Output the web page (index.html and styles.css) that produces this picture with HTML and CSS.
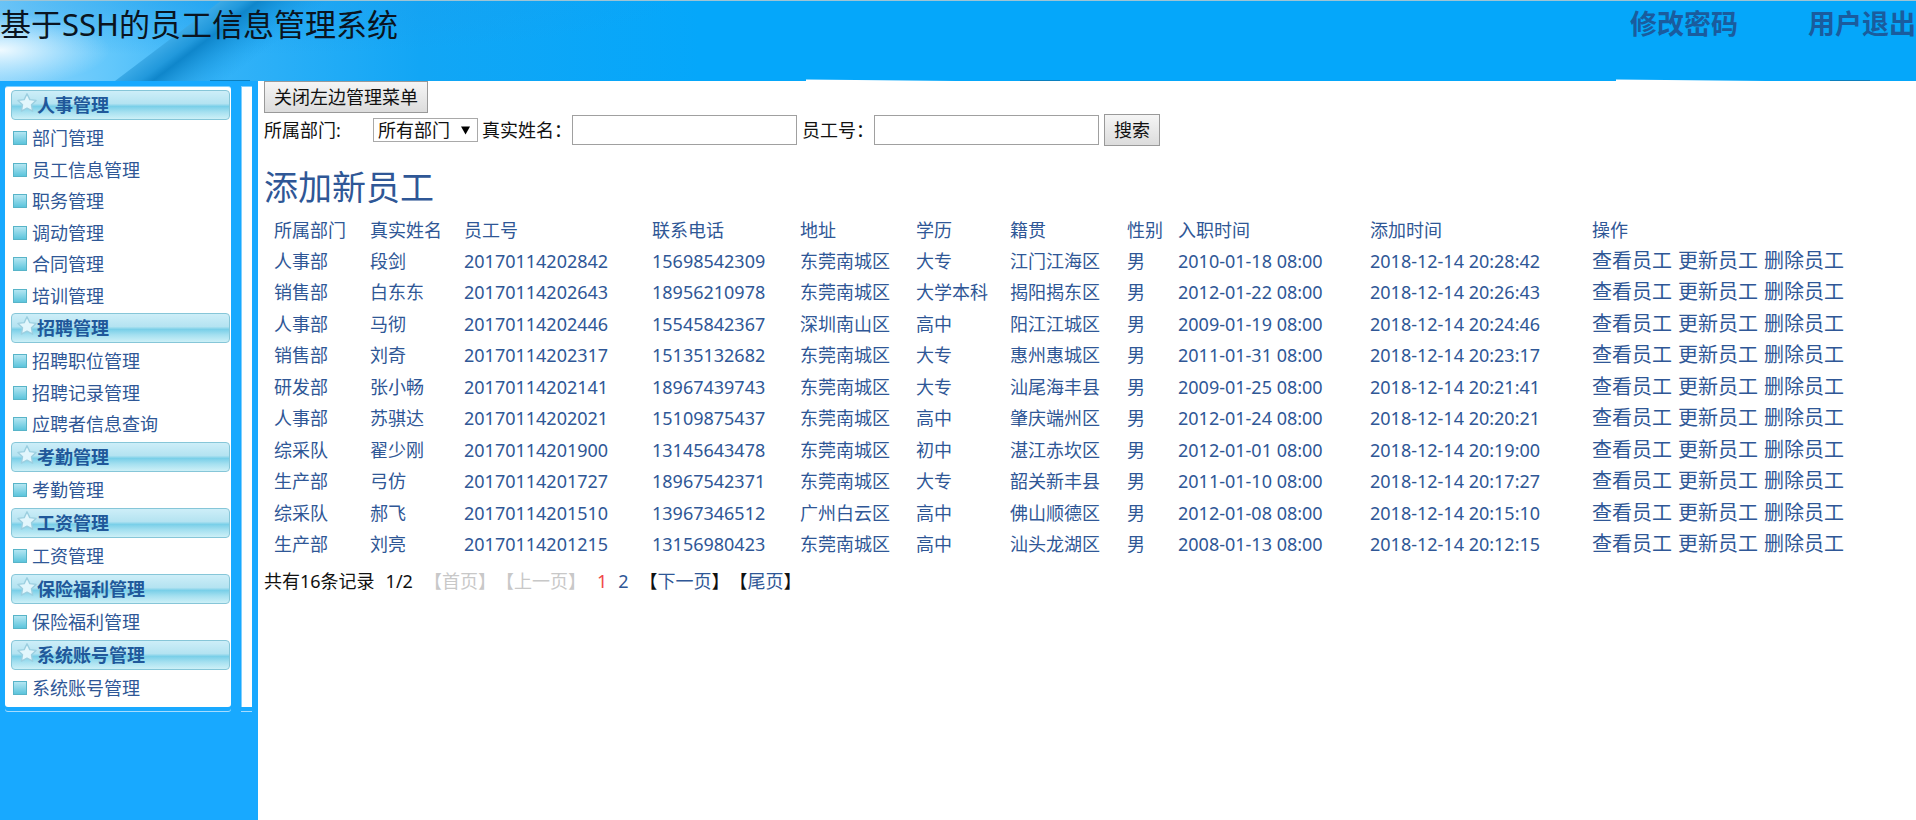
FILE: index.html
```html
<!DOCTYPE html>
<html lang="zh-CN">
<head>
<meta charset="utf-8">
<title>基于SSH的员工信息管理系统</title>
<link rel="stylesheet" href="styles.css">
</head>
<body>
<svg class="defs" aria-hidden="true">
  <symbol id="star" viewBox="0 0 20 20">
    <path d="M10 .8 12.800 6.600l6.200.8-4.500 4.400 1.100 6.300L10 15.100l-5.600 3 1.100-6.300L1 7.400l6.200-.8z" fill="#e2f6fc" stroke="#9ccfe0" stroke-width="1.400" stroke-linejoin="round"/>
  </symbol>
</svg>
<header class="top">
  <svg class="top-art" width="1916" height="80" viewBox="0 1 1916 80" aria-hidden="true">
    <defs>
      <linearGradient id="sky" x1="0" x2="1" y1="0" y2="0">
        <stop offset="0" stop-color="#8fd5fb"/><stop offset=".16" stop-color="#62c7fb"/><stop offset=".3" stop-color="#35b3f8"/><stop offset=".6" stop-color="#12a6f5"/><stop offset="1" stop-color="#05a7fa"/>
      </linearGradient>
      <radialGradient id="shade" gradientUnits="userSpaceOnUse" cx="0" cy="0" r="1" gradientTransform="translate(200 0) scale(480 55)">
        <stop offset="0" stop-color="#1a9cec" stop-opacity=".55"/><stop offset="1" stop-color="#1a9cec" stop-opacity="0"/>
      </radialGradient>
      <radialGradient id="glow" gradientUnits="userSpaceOnUse" cx="0" cy="0" r="1" gradientTransform="translate(0 50) scale(110 36)">
        <stop offset="0" stop-color="#f0faff"/><stop offset="1" stop-color="#c8ecff" stop-opacity="0"/>
      </radialGradient>
      <linearGradient id="beam" gradientUnits="userSpaceOnUse" x1="168" y1="41" x2="208" y2="94">
        <stop offset="0" stop-color="#3aa9e6"/><stop offset=".22" stop-color="#2299dc"/><stop offset=".34" stop-color="#0f86cb"/><stop offset="1" stop-color="#1b9fe8" stop-opacity="0"/>
      </linearGradient>
    </defs>
    <rect width="700" height="81" fill="url(#sky)"/>
    <rect width="700" height="81" fill="url(#shade)"/>
    <rect width="140" height="81" fill="url(#glow)"/>
    <path d="M222 0H440V81H115z" fill="url(#beam)"/>
    <path d="M210 80h40v1h-40zM1020 80h40v1h-40zM1830 80h40v1h-40z" fill="#0b7fbd"/>
    <path d="M806 79.500l150 1.500H806zM1616 79.500l150 1.500h-150z" fill="#fff"/>
  </svg>
  <h1 class="top-title">基于SSH的员工信息管理系统</h1>
  <nav class="top-nav">
    <a href="#">修改密码</a>
    <a href="#">用户退出</a>
  </nav>
</header>
<div class="body">
  <aside class="side">
    <div class="side-row">
    <nav class="menu">
      <h2><svg><use href="#star"/></svg>人事管理</h2>
      <ul>
        <li><a href="#">部门管理</a></li>
        <li><a href="#">员工信息管理</a></li>
        <li><a href="#">职务管理</a></li>
        <li><a href="#">调动管理</a></li>
        <li><a href="#">合同管理</a></li>
        <li><a href="#">培训管理</a></li>
      </ul>
      <h2><svg><use href="#star"/></svg>招聘管理</h2>
      <ul>
        <li><a href="#">招聘职位管理</a></li>
        <li><a href="#">招聘记录管理</a></li>
        <li><a href="#">应聘者信息查询</a></li>
      </ul>
      <h2><svg><use href="#star"/></svg>考勤管理</h2>
      <ul><li><a href="#">考勤管理</a></li></ul>
      <h2><svg><use href="#star"/></svg>工资管理</h2>
      <ul><li><a href="#">工资管理</a></li></ul>
      <h2><svg><use href="#star"/></svg>保险福利管理</h2>
      <ul><li><a href="#">保险福利管理</a></li></ul>
      <h2><svg><use href="#star"/></svg>系统账号管理</h2>
      <ul><li><a href="#">系统账号管理</a></li></ul>
    </nav>
    <div class="rail"></div>
    </div>
  </aside>
  <main class="main">
    <button type="button" class="btn">关闭左边管理菜单</button>
    <form class="search">
      <label class="dept-label" for="dept">所属部门:</label>
      <span class="select-box"><select id="dept"><option>所有部门</option></select><svg width="9" height="9" viewBox="0 0 10 9" aria-hidden="true"><path d="M0 0h10L5 9z"/></svg></span>
      <label for="name">真实姓名：</label><input id="name" type="text">
      <label for="no">员工号：</label><input id="no" type="text">
      <button type="submit" class="btn">搜索</button>
    </form>
    <a class="add" href="#">添加新员工</a>
    <table class="staff">
      <colgroup><col class="c-dept"><col class="c-name"><col class="c-no"><col class="c-tel"><col class="c-addr"><col class="c-edu"><col class="c-from"><col class="c-sex"><col class="c-join"><col class="c-added"><col></colgroup>
      <thead>
        <tr><th>所属部门</th><th>真实姓名</th><th>员工号</th><th>联系电话</th><th>地址</th><th>学历</th><th>籍贯</th><th>性别</th><th>入职时间</th><th>添加时间</th><th>操作</th></tr>
      </thead>
      <tbody>
        <tr><td>人事部</td><td>段剑</td><td>20170114202842</td><td>15698542309</td><td>东莞南城区</td><td>大专</td><td>江门江海区</td><td>男</td><td>2010-01-18 08:00</td><td>2018-12-14 20:28:42</td><td><div class="ops"><a href="#">查看员工</a><a href="#">更新员工</a><a href="#">删除员工</a></div></td></tr>
        <tr><td>销售部</td><td>白东东</td><td>20170114202643</td><td>18956210978</td><td>东莞南城区</td><td>大学本科</td><td>揭阳揭东区</td><td>男</td><td>2012-01-22 08:00</td><td>2018-12-14 20:26:43</td><td><div class="ops"><a href="#">查看员工</a><a href="#">更新员工</a><a href="#">删除员工</a></div></td></tr>
        <tr><td>人事部</td><td>马彻</td><td>20170114202446</td><td>15545842367</td><td>深圳南山区</td><td>高中</td><td>阳江江城区</td><td>男</td><td>2009-01-19 08:00</td><td>2018-12-14 20:24:46</td><td><div class="ops"><a href="#">查看员工</a><a href="#">更新员工</a><a href="#">删除员工</a></div></td></tr>
        <tr><td>销售部</td><td>刘奇</td><td>20170114202317</td><td>15135132682</td><td>东莞南城区</td><td>大专</td><td>惠州惠城区</td><td>男</td><td>2011-01-31 08:00</td><td>2018-12-14 20:23:17</td><td><div class="ops"><a href="#">查看员工</a><a href="#">更新员工</a><a href="#">删除员工</a></div></td></tr>
        <tr><td>研发部</td><td>张小畅</td><td>20170114202141</td><td>18967439743</td><td>东莞南城区</td><td>大专</td><td>汕尾海丰县</td><td>男</td><td>2009-01-25 08:00</td><td>2018-12-14 20:21:41</td><td><div class="ops"><a href="#">查看员工</a><a href="#">更新员工</a><a href="#">删除员工</a></div></td></tr>
        <tr><td>人事部</td><td>苏骐达</td><td>20170114202021</td><td>15109875437</td><td>东莞南城区</td><td>高中</td><td>肇庆端州区</td><td>男</td><td>2012-01-24 08:00</td><td>2018-12-14 20:20:21</td><td><div class="ops"><a href="#">查看员工</a><a href="#">更新员工</a><a href="#">删除员工</a></div></td></tr>
        <tr><td>综采队</td><td>翟少刚</td><td>20170114201900</td><td>13145643478</td><td>东莞南城区</td><td>初中</td><td>湛江赤坎区</td><td>男</td><td>2012-01-01 08:00</td><td>2018-12-14 20:19:00</td><td><div class="ops"><a href="#">查看员工</a><a href="#">更新员工</a><a href="#">删除员工</a></div></td></tr>
        <tr><td>生产部</td><td>弓仿</td><td>20170114201727</td><td>18967542371</td><td>东莞南城区</td><td>大专</td><td>韶关新丰县</td><td>男</td><td>2011-01-10 08:00</td><td>2018-12-14 20:17:27</td><td><div class="ops"><a href="#">查看员工</a><a href="#">更新员工</a><a href="#">删除员工</a></div></td></tr>
        <tr><td>综采队</td><td>郝飞</td><td>20170114201510</td><td>13967346512</td><td>广州白云区</td><td>高中</td><td>佛山顺德区</td><td>男</td><td>2012-01-08 08:00</td><td>2018-12-14 20:15:10</td><td><div class="ops"><a href="#">查看员工</a><a href="#">更新员工</a><a href="#">删除员工</a></div></td></tr>
        <tr><td>生产部</td><td>刘亮</td><td>20170114201215</td><td>13156980423</td><td>东莞南城区</td><td>高中</td><td>汕头龙湖区</td><td>男</td><td>2008-01-13 08:00</td><td>2018-12-14 20:12:15</td><td><div class="ops"><a href="#">查看员工</a><a href="#">更新员工</a><a href="#">删除员工</a></div></td></tr>
      </tbody>
    </table>
    <div class="pager">
      <span>共有16条记录</span>
      <span>1/2</span>
      <span class="off">【首页】【上一页】</span>
      <span class="now">1</span>
      <a href="#">2</a>
      <span class="jump">【<a href="#">下一页</a>】【<a href="#">尾页</a>】</span>
    </div>
  </main>
</div>
</body>
</html>
```
FILE: styles.css
```css
* { box-sizing: border-box; }
body {
  margin: 0;
  min-height: 100vh;
  display: flex;
  flex-direction: column;
  background: #fff;
  color: #111;
  font: 18px/28px "Noto Sans", "Noto Sans CJK SC", sans-serif;
  text-spacing-trim: space-all;
}
a { color: inherit; text-decoration: none; }
h1, h2, ul { margin: 0; padding: 0; font-weight: normal; }
ul { list-style: none; }
.defs { position: absolute; width: 0; height: 0; }

.top {
  position: relative;
  display: flex;
  justify-content: space-between;
  height: 81px;
  overflow: hidden;
  background: #05a7fa;
  border-top: 1px solid #9fc4d4;
}
.top-art { position: absolute; left: 0; top: 0; }
.top-title {
  position: relative;
  font-size: 31px;
  line-height: 46px;
  color: #0a1420;
}
.top-nav {
  position: relative;
  display: flex;
  gap: 70px;
  font-size: 27px;
  line-height: 46px;
  font-weight: bold;
  color: #1a5c9e;
}

.body { flex: 1; display: flex; }
.side {
  flex: none;
  width: 258px;
  padding: 5px 6px 0 5px;
  background: #18a9ff;
}
.side-row { display: flex; gap: 10px; }
.menu {
  width: 226px;
  padding: 3px 1px 1px 6px;
  background: #fff;
  border-top: 1px solid #7fd0ff;
  border-radius: 3px;
  box-shadow: 0 4px 0 #18a9ff, 0 5px 0 #a5dcff;
}
.rail {
  flex: 1;
  background: #fff;
  border-left: 1px solid #7fd0ff;
  border-top: 1px solid #7fd0ff;
  box-shadow: 0 4px 0 #18a9ff, 0 5px 0 #a5dcff;
}
.menu h2 {
  display: flex;
  align-items: center;
  height: 30px;
  margin: 0 0 4px;
  padding-left: 5px;
  font-size: 18px;
  font-weight: bold;
  color: #20589a;
  border: 1px solid #86c6d8;
  border-radius: 4px;
  background: linear-gradient(#cdeef8, #b4e3f1 45%, #79cfe8 55%, #a5e0f0 75%, #cdf0f7);
}
.menu h2 svg { width: 20px; height: 20px; margin-bottom: 4px; }
.menu li { height: 31px; padding-left: 2px; }
.menu li:nth-child(odd) { height: 32px; }
.menu li a { display: flex; align-items: center; gap: 5px; color: #2f5796; }
.menu li a::before {
  content: "";
  width: 12px;
  height: 12px;
  border: 1px solid #58b4c8;
  background: linear-gradient(#b4e6f2, #5cc4dc);
}

.main { flex: 1; min-width: 0; padding-left: 6px; }
.btn {
  display: block;
  height: 32px;
  padding: 0 9px;
  border: 1px solid #999;
  background: linear-gradient(#f5f5f5, #dcdcdc);
  color: #111;
  font: inherit;
}
.search { display: flex; align-items: center; height: 34px; }
.search .dept-label { width: 109px; }
.select-box { display: flex; align-items: center; position: relative; margin-right: 4px; }
.select-box svg { position: absolute; right: 8px; pointer-events: none; }
.search select {
  appearance: none;
  width: 105px;
  height: 24px;
  padding: 0 4px;
  border: 1px solid #a9a9a9;
  border-radius: 0;
  background: #fff;
  color: #111;
  font: inherit;
  line-height: 22px;
}
.search input {
  width: 225px;
  height: 30px;
  margin-right: 5px;
  border: 1px solid #a0a0a0;
  font: inherit;
}
.add {
  display: block;
  width: max-content;
  margin: 15px 0 2px;
  font-size: 34px;
  line-height: 50px;
  color: #2f5796;
}
.staff {
  width: 100%;
  table-layout: fixed;
  border-collapse: collapse;
  color: #2f5796;
}
.staff tr { height: 31px; }
.staff tr:nth-child(even) { height: 32px; }
.staff th, .staff td {
  padding: 0 0 0 10px;
  text-align: left;
  font-weight: normal;
  white-space: nowrap;
}
.ops { display: flex; gap: 6px; font-size: 20px; }
.c-dept { width: 96px; }
.c-name { width: 94px; }
.c-no { width: 188px; }
.c-tel { width: 148px; }
.c-addr { width: 116px; }
.c-edu { width: 94px; }
.c-from { width: 117px; }
.c-sex { width: 51px; }
.c-join { width: 192px; }
.c-added { width: 222px; }
.pager { display: flex; gap: 11px; margin-top: 7px; }
.pager .off { color: #c8c8c8; }
.pager .now { color: #f04848; }
.pager a { color: #2f5796; }
```
